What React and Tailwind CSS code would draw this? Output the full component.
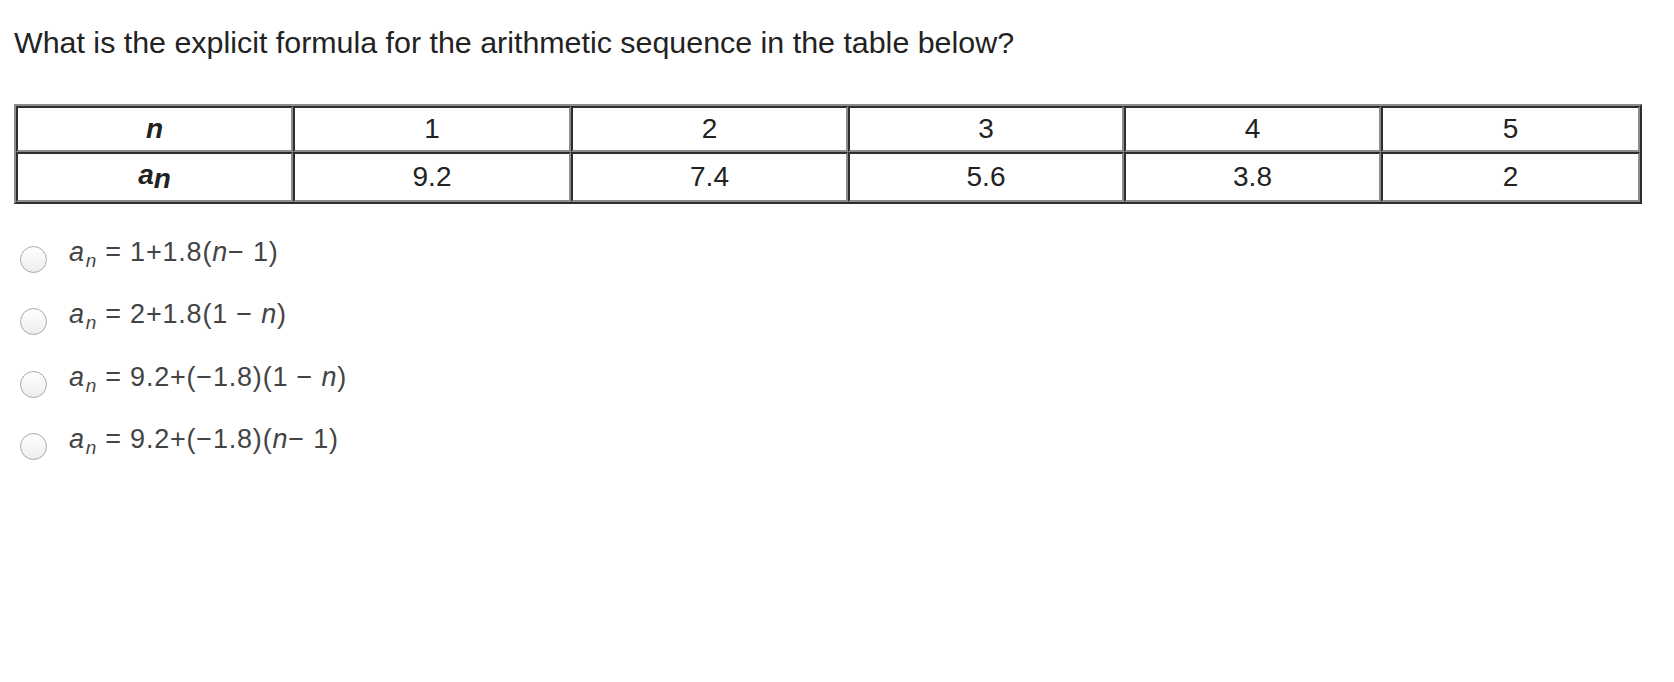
const columns = [
    { n: "1", a: "9.2", w: "w-[278px]" },
    { n: "2", a: "7.4", w: "w-[277px]" },
    { n: "3", a: "5.6", w: "w-[276px]" },
    { n: "4", a: "3.8", w: "w-[257px]" },
    { n: "5", a: "2", w: "w-[259px]" },
];

const cell =
    "border-2 border-t-[#2e2e2e] border-l-[#2e2e2e] border-b-[#8c8c8c] border-r-[#8c8c8c] text-center align-middle p-0";

const Sub = () => (
    <>
        <i>a</i>
        <i className="text-[19px] align-[-6px] ml-[1px] mr-[8px]">n</i>
    </>
);

const options = [
    <>
        <Sub />= 1+1.8(<i>n</i>− 1)
    </>,
    <>
        <Sub />= 2+1.8(1 − <i>n</i>)
    </>,
    <>
        <Sub />= 9.2+(−1.8)(1 − <i>n</i>)
    </>,
    <>
        <Sub />= 9.2+(−1.8)(<i>n</i>− 1)
    </>,
];

const App = () => {
    return (
        <div className="w-full h-[682px] bg-white text-[#222] font-['Liberation_Sans',Arial,sans-serif] pl-[14px]">
            <p className="pt-[25px] text-[30.4px] leading-[34px]">
                What is the explicit formula for the arithmetic sequence in the table below?
            </p>

            <table className="mt-[45px] w-[1628px] table-fixed border-separate border-spacing-0 border-2 border-t-[#8c8c8c] border-l-[#8c8c8c] border-b-[#2e2e2e] border-r-[#2e2e2e] text-[28px]">
                <tbody>
                    <tr>
                        <td className={`${cell} w-[277px] h-[46px] font-bold italic`}>n</td>
                        {columns.map((col) => (
                            <td key={col.n} className={`${cell} ${col.w} h-[46px]`}>
                                {col.n}
                            </td>
                        ))}
                    </tr>
                    <tr>
                        <td className={`${cell} h-[47px] font-bold italic`}>
                            a<span className="align-[-4px]">n</span>
                        </td>
                        {columns.map((col) => (
                            <td key={col.n} className={`${cell} h-[47px]`}>
                                {col.a}
                            </td>
                        ))}
                    </tr>
                </tbody>
            </table>

            <div className="mt-[24px] flex flex-col">
                {options.map((opt, i) => (
                    <label key={i} className="h-[62.5px] flex items-center cursor-pointer">
                        <input
                            type="radio"
                            name="answer"
                            className="appearance-none ml-[6px] w-[27px] h-[27px] rounded-full border border-[#a8a8a8] bg-linear-to-b from-white to-[#ededed]"
                        />
                        <span className="ml-[22px] pb-[6px] text-[27px] leading-[32px] tracking-[0.8px] text-[#444]">
                            {opt}
                        </span>
                    </label>
                ))}
            </div>
        </div>
    );
};

export default App;
